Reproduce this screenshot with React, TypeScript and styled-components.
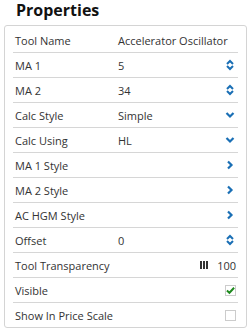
import styled, { createGlobalStyle } from "styled-components";

const GlobalStyle = createGlobalStyle`
  body {
    margin: 0;
    background: #fff;
    font-family: "Open Sans", "Liberation Sans", sans-serif;
    color: #333;
  }
`;

const Page = styled.div`
  width: 251px;
  height: 333px;
  padding: 0 4px;
  box-sizing: border-box;
`;

const Heading = styled.h2`
  margin: 0;
  padding: 0 0 0 12px;
  height: 25px;
  line-height: 20px;
  font-size: 16px;
  font-weight: 700;
  color: #111;
`;

const Panel = styled.div`
  border: 1px solid #d4d4d4;
  border-radius: 3px;
  padding: 2px 8px 0 8px;
`;

const Row = styled.div`
  display: flex;
  align-items: center;
  height: 24px;
  padding: 0 2px;
  font-size: 11px;
  border-bottom: 1px solid #d6d6d6;
  &:last-child {
    border-bottom: none;
  }
`;

const Label = styled.span`
  width: 103px;
  flex-shrink: 0;
  white-space: nowrap;
`;

const Value = styled.span`
  flex: 1;
  white-space: nowrap;
`;

const IconBox = styled.span`
  display: flex;
  align-items: center;
  justify-content: center;
  width: 12px;
  height: 12px;
`;

const Transparency = styled.span`
  display: flex;
  align-items: center;
  gap: 9px;
  margin-left: auto;
`;

const Bars = styled.span`
  display: flex;
  gap: 1px;
  span {
    width: 2px;
    height: 8px;
    background: #333;
  }
`;

const Box = styled.span`
  width: 11px;
  height: 11px;
  border: 1px solid #ccc;
  box-sizing: border-box;
  display: flex;
  align-items: center;
  justify-content: center;
`;

const Spinner = () => (
  <svg width="8" height="12" viewBox="0 0 8 12">
    <path d="M1 5 L4 2 L7 5" fill="none" stroke="#1a6fb5" strokeWidth="2" />
    <path d="M1 7 L4 10 L7 7" fill="none" stroke="#1a6fb5" strokeWidth="2" />
  </svg>
);

const Down = () => (
  <svg width="10" height="8" viewBox="0 0 10 8">
    <path d="M1.5 2 L5 5.5 L8.5 2" fill="none" stroke="#1a6fb5" strokeWidth="2.2" />
  </svg>
);

const Right = () => (
  <svg width="8" height="10" viewBox="0 0 8 10">
    <path d="M2 1.5 L5.5 5 L2 8.5" fill="none" stroke="#1a6fb5" strokeWidth="2.2" />
  </svg>
);

const Check = () => (
  <svg width="10" height="9" viewBox="0 0 10 9">
    <path d="M1 4.5 L3.8 7 L9 1.5" fill="none" stroke="#1f8a1f" strokeWidth="2.2" />
  </svg>
);

type Kind = "spin" | "down" | "right" | "none";

const rows: { label: string; value?: string; kind: Kind }[] = [
  { label: "Tool Name", value: "Accelerator Oscillator", kind: "none" },
  { label: "MA 1", value: "5", kind: "spin" },
  { label: "MA 2", value: "34", kind: "spin" },
  { label: "Calc Style", value: "Simple", kind: "down" },
  { label: "Calc Using", value: "HL", kind: "down" },
  { label: "MA 1 Style", kind: "right" },
  { label: "MA 2 Style", kind: "right" },
  { label: "AC HGM Style", kind: "right" },
  { label: "Offset", value: "0", kind: "spin" },
];

function Icon({ kind }: { kind: Kind }) {
  if (kind === "none") return null;
  return (
    <IconBox>
      {kind === "spin" ? <Spinner /> : kind === "down" ? <Down /> : <Right />}
    </IconBox>
  );
}

export default function App() {
  return (
    <Page>
      <GlobalStyle />
      <Heading>Properties</Heading>
      <Panel>
        {rows.map((r) => (
          <Row key={r.label}>
            <Label>{r.label}</Label>
            <Value>{r.value}</Value>
            <Icon kind={r.kind} />
          </Row>
        ))}
        <Row>
          <Label>Tool Transparency</Label>
          <Transparency>
            <Bars>
              <span />
              <span />
              <span />
            </Bars>
            100
          </Transparency>
        </Row>
        <Row>
          <Label>Visible</Label>
          <Value />
          <Box>
            <Check />
          </Box>
        </Row>
        <Row>
          <Label>Show In Price Scale</Label>
          <Value />
          <Box />
        </Row>
      </Panel>
    </Page>
  );
}
